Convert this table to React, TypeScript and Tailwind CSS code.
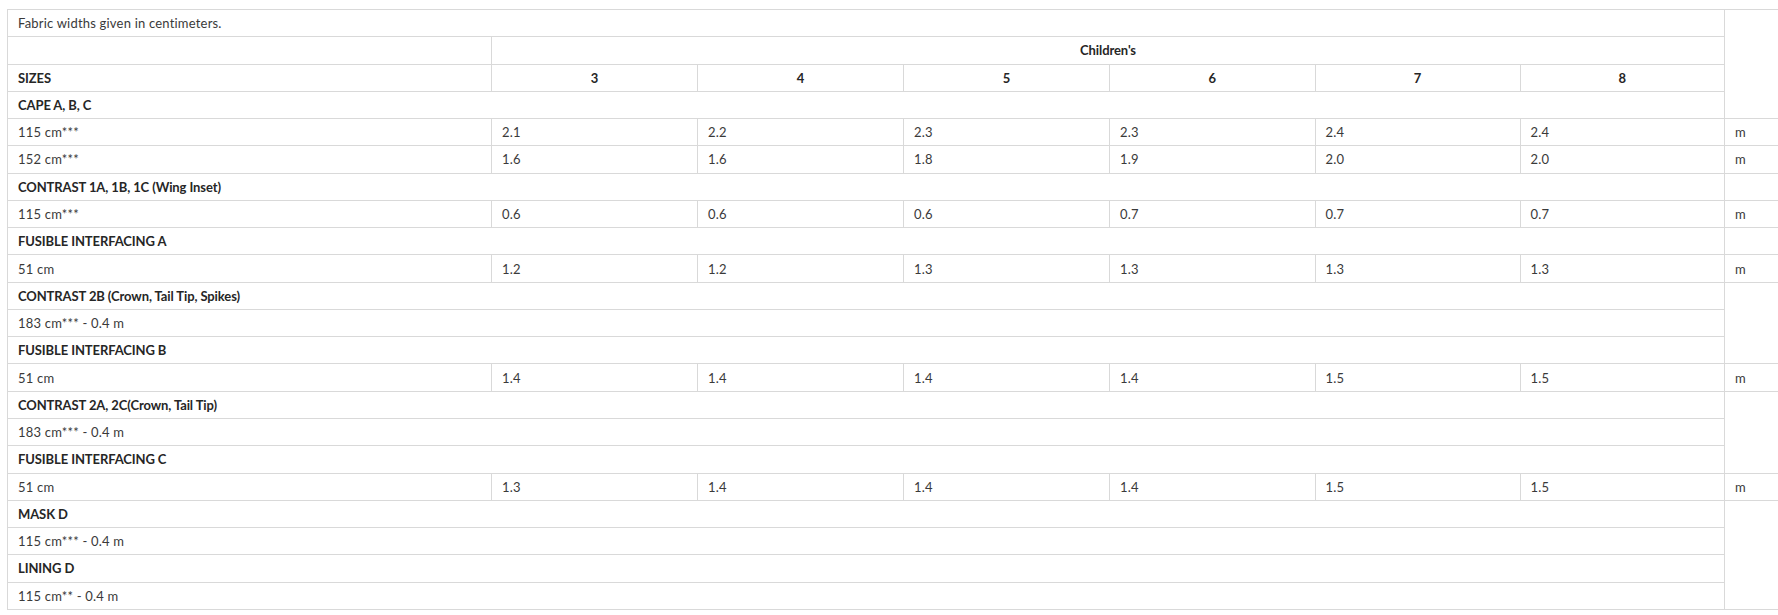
import React from "react";

const cell = "border border-[#d9d9d9] px-[10px] py-0 align-middle tracking-[0.2px]";
const hcell = "border border-[#d9d9d9] px-[10px] py-0 align-middle font-bold text-[#262626] tracking-[-0.1px]";

type DataRow = { label: string; vals: string[] };

function Header({ text, tail }: { text: string; tail?: React.ReactNode }) {
  return (
    <tr className="h-[27.27px]">
      <td colSpan={7} className={hcell}>
        {text}
      </td>
      {tail}
    </tr>
  );
}

function Data({ r }: { r: DataRow }) {
  return (
    <tr className="h-[27.27px]">
      <td className={cell}>{r.label}</td>
      {r.vals.map((v, i) => (
        <td key={i} className={cell}>
          {v}
        </td>
      ))}
      <td className={cell}>m</td>
    </tr>
  );
}

function Span({ text }: { text: string }) {
  return (
    <tr className="h-[27.27px]">
      <td colSpan={7} className={cell}>
        {text}
      </td>
    </tr>
  );
}

export default function App() {
  return (
    <div className="w-[1778px] h-[615px] overflow-hidden bg-white pl-[7px] pt-[9px]">
      <table
        className="table-fixed border-collapse w-[1860px] text-[13px] leading-[16px] text-[#3a3a3a]"
        style={{ fontFamily: "Lato, 'Open Sans', sans-serif" }}
      >
        <colgroup>
          <col className="w-[484px]" />
          <col className="w-[206px]" />
          <col className="w-[206px]" />
          <col className="w-[206px]" />
          <col className="w-[205.5px]" />
          <col className="w-[205px]" />
          <col className="w-[204.5px]" />
          <col />
        </colgroup>
        <tbody>
          <tr className="h-[27.27px]">
            <td colSpan={7} className={cell}>
              Fabric widths given in centimeters.
            </td>
            <td rowSpan={4} className={cell}></td>
          </tr>
          <tr className="h-[27.27px]">
            <td className={cell}></td>
            <td colSpan={6} className={`${hcell} text-center`}>
              Children's
            </td>
          </tr>
          <tr className="h-[27.27px]">
            <td className={hcell}>SIZES</td>
            {["3", "4", "5", "6", "7", "8"].map((s) => (
              <td key={s} className={`${hcell} text-center`}>
                {s}
              </td>
            ))}
          </tr>
          <Header text="CAPE A, B, C" />
          <Data r={{ label: "115 cm***", vals: ["2.1", "2.2", "2.3", "2.3", "2.4", "2.4"] }} />
          <Data r={{ label: "152 cm***", vals: ["1.6", "1.6", "1.8", "1.9", "2.0", "2.0"] }} />
          <Header text="CONTRAST 1A, 1B, 1C (Wing Inset)" tail={<td className={cell}></td>} />
          <Data r={{ label: "115 cm***", vals: ["0.6", "0.6", "0.6", "0.7", "0.7", "0.7"] }} />
          <Header text="FUSIBLE INTERFACING A" tail={<td className={cell}></td>} />
          <Data r={{ label: "51 cm", vals: ["1.2", "1.2", "1.3", "1.3", "1.3", "1.3"] }} />
          <Header
            text="CONTRAST 2B (Crown, Tail Tip, Spikes)"
            tail={<td rowSpan={3} className={cell}></td>}
          />
          <Span text="183 cm*** - 0.4 m" />
          <Header text="FUSIBLE INTERFACING B" />
          <Data r={{ label: "51 cm", vals: ["1.4", "1.4", "1.4", "1.4", "1.5", "1.5"] }} />
          <Header
            text="CONTRAST 2A, 2C(Crown, Tail Tip)"
            tail={<td rowSpan={3} className={cell}></td>}
          />
          <Span text="183 cm*** - 0.4 m" />
          <Header text="FUSIBLE INTERFACING C" />
          <Data r={{ label: "51 cm", vals: ["1.3", "1.4", "1.4", "1.4", "1.5", "1.5"] }} />
          <Header text="MASK D" tail={<td rowSpan={4} className={cell}></td>} />
          <Span text="115 cm*** - 0.4 m" />
          <Header text="LINING D" />
          <Span text="115 cm** - 0.4 m" />
        </tbody>
      </table>
    </div>
  );
}
